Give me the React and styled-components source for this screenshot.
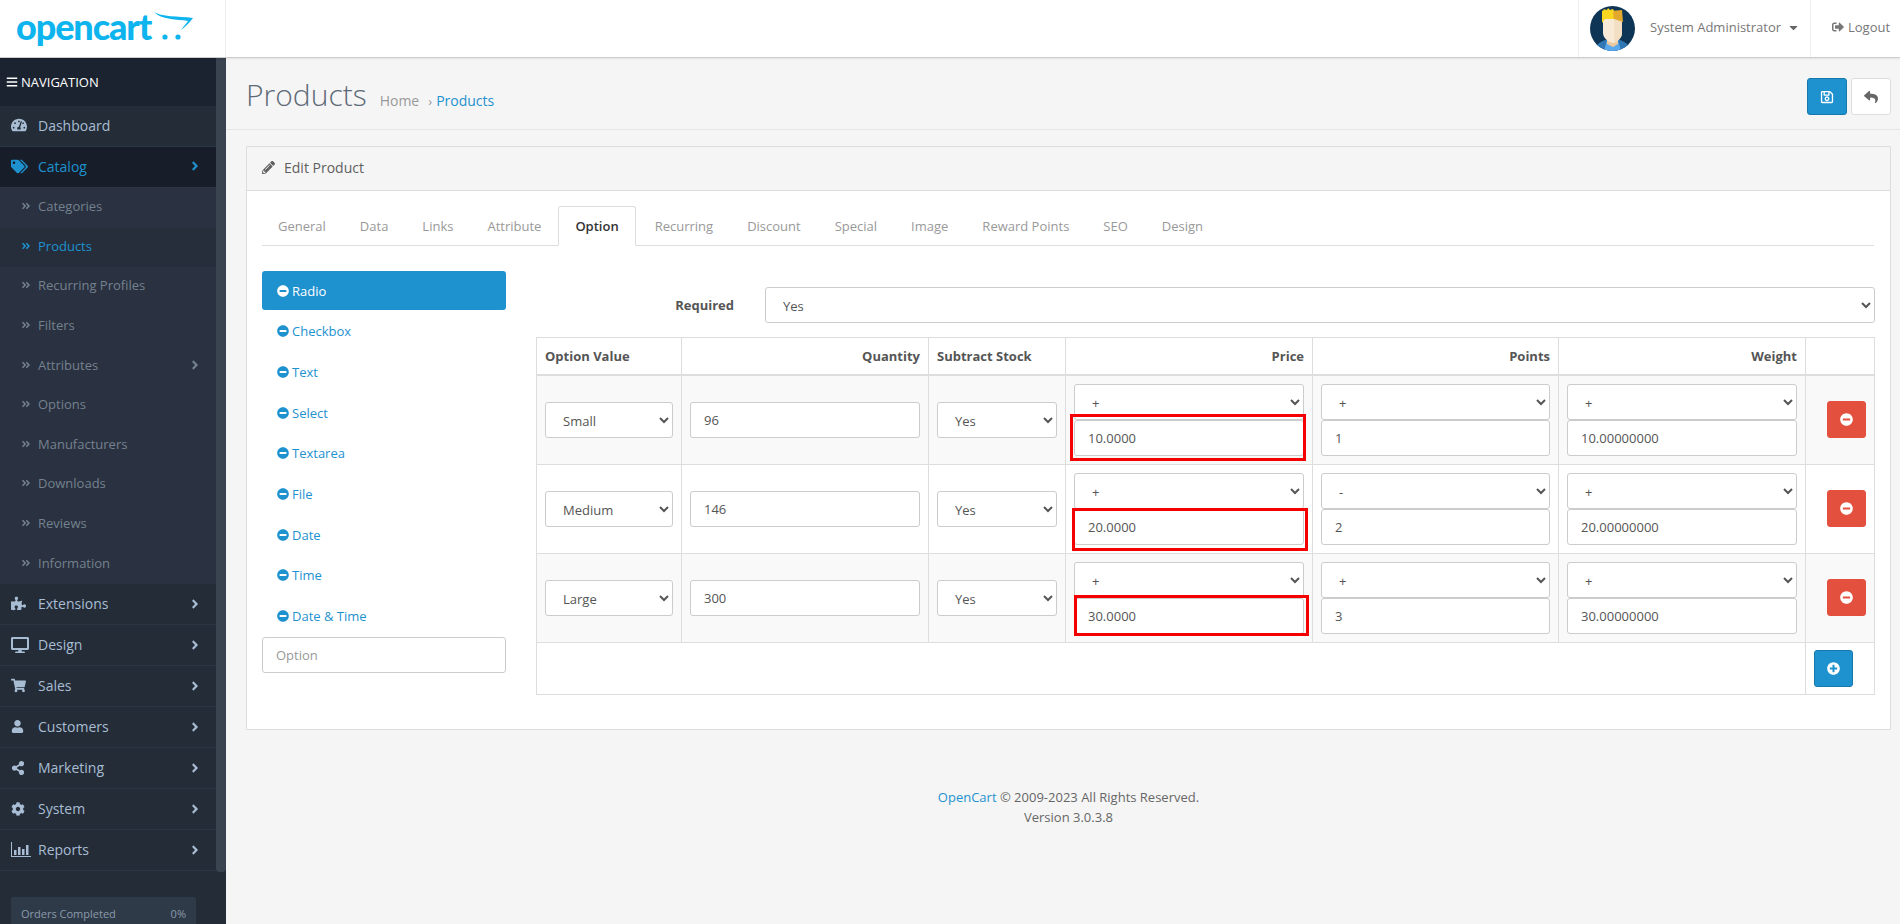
import React from 'react';
import styled, { createGlobalStyle } from 'styled-components';
import {
  FaAngleDoubleRight,
  FaAngleRight,
  FaBars,
  FaCaretDown,
  FaCog,
  FaDesktop,
  FaMinusCircle,
  FaPencilAlt,
  FaPlusCircle,
  FaPuzzlePiece,
  FaRegSave,
  FaReply,
  FaShareAlt,
  FaShoppingCart,
  FaSignOutAlt,
  FaTachometerAlt,
  FaTags,
  FaUser,
} from 'react-icons/fa';

const blue = '#1e91cf';

const GlobalStyle = createGlobalStyle`
  html, body {
    margin: 0;
    height: 100%;
    overflow: hidden;
    background: #f5f5f5;
    font-family: "Open Sans", sans-serif;
    font-size: 13px;
    color: #666;
  }
  * { box-sizing: border-box; }
`;

/* small chart icon, the package one has no axis like this */
const ReportsIcon = () => (
  <svg width="20" height="15" viewBox="0 0 20 15" fill="currentColor">
    <path d="M0 0h1v14h19v1H0z" />
    <path d="M3 8h2.5v5H3zM7 5h2.5v8H7zM11 7h2.5v6H11zM15 3h2.5v10H15z" />
  </svg>
);

const Avatar = () => (
  <svg width="45" height="45" viewBox="0 0 45 45">
    <clipPath id="avatar-clip"><circle cx="22.5" cy="22.5" r="22.5" /></clipPath>
    <g clipPath="url(#avatar-clip)">
      <rect width="45" height="45" fill="#0f3556" />
      <path d="M4 45c1-6 6-9 11-11h15c5 2 10 5 11 11z" fill="#2f77b5" />
      <path d="M14 45l3-11h11l3 11z" fill="#5ba8ea" />
      <path d="M17 38v-7h11v7l-5 3z" fill="#eec9a0" />
      <path d="M13 13h19v14c0 5-5 9-9 10-5-1-10-5-10-10z" fill="#f8ead6" />
      <path d="M24 13h8v14c0 5-4 8-8 10z" fill="#f3dfc4" />
      <path d="M20 5l12-1 1 12-9-3z" fill="#e3a92d" />
      <path d="M12 5l2-1-1-1 4 1 1-2 2 2 3-1 1 2-1 2 1 6-9 0-3 4z" fill="#f9d61f" />
    </g>
  </svg>
);

const Logo = () => (
  <LogoWrap>
    <LogoText>opencart</LogoText>
    <LogoCart width="42" height="30" viewBox="0 0 42 30" fill="#0db4ee">
      <path d="M2 0c7 5 24 4 39 6-3 4-8 9-12 12 2-3 5-6 7-9C25 7 9 8 2 0z" />
      <circle cx="13" cy="25" r="2.6" />
      <circle cx="26" cy="25" r="2.6" />
    </LogoCart>
  </LogoWrap>
);

const Header = () => (
  <TopBar>
    <LogoCell><Logo /></LogoCell>
    <TopSpacer />
    <UserCell>
      <Avatar />
      <UserName>System Administrator</UserName>
      <FaCaretDown size={13} color="#666" />
    </UserCell>
    <LogoutCell>
      <FaSignOutAlt size={12} />
      Logout
    </LogoutCell>
  </TopBar>
);

const mainMenu = [
  { icon: <FaPuzzlePiece size={15} />, label: 'Extensions' },
  { icon: <FaDesktop size={18} />, label: 'Design' },
  { icon: <FaShoppingCart size={15} />, label: 'Sales' },
  { icon: <FaUser size={13} />, label: 'Customers' },
  { icon: <FaShareAlt size={14} />, label: 'Marketing' },
  { icon: <FaCog size={14} />, label: 'System' },
  { icon: <ReportsIcon />, label: 'Reports' },
];

const catalogMenu = [
  { label: 'Categories' },
  { label: 'Products', active: true },
  { label: 'Recurring Profiles' },
  { label: 'Filters' },
  { label: 'Attributes', more: true },
  { label: 'Options' },
  { label: 'Manufacturers' },
  { label: 'Downloads' },
  { label: 'Reviews' },
  { label: 'Information' },
];

const Sidebar = () => (
  <Side>
    <SideColumn>
      <NavTitle><FaBars size={12} /> NAVIGATION</NavTitle>
      <NavItem $raised>
        <NavIcon><FaTachometerAlt size={16} /></NavIcon>
        Dashboard
      </NavItem>
      <NavItem $active $raised>
        <NavIcon><FaTags size={17} /></NavIcon>
        Catalog
        <Chevron><FaAngleRight size={14} /></Chevron>
      </NavItem>
      {catalogMenu.map((item) => (
        <SubItem key={item.label} $active={item.active}>
          <SubIcon><FaAngleDoubleRight size={10} /></SubIcon>
          {item.label}
          {item.more && <Chevron><FaAngleRight size={14} /></Chevron>}
        </SubItem>
      ))}
      {mainMenu.map((item) => (
        <NavItem key={item.label}>
          <NavIcon>{item.icon}</NavIcon>
          {item.label}
          <Chevron><FaAngleRight size={14} /></Chevron>
        </NavItem>
      ))}
      <Stats>
        <span>Orders Completed</span>
        <span>0%</span>
      </Stats>
    </SideColumn>
    <ScrollThumb />
  </Side>
);

const tabs = ['General', 'Data', 'Links', 'Attribute', 'Option', 'Recurring', 'Discount', 'Special', 'Image', 'Reward Points', 'SEO', 'Design'];
const pills = ['Radio', 'Checkbox', 'Text', 'Select', 'Textarea', 'File', 'Date', 'Time', 'Date & Time'];

const rows = [
  { name: 'Small', qty: '96', price: '10.0000', pointsSign: '+', points: '1', weight: '10.00000000', mark: { top: -6, bottom: -5, left: -4, right: -2 } },
  { name: 'Medium', qty: '146', price: '20.0000', pointsSign: '-', points: '2', weight: '20.00000000', mark: { top: -1, bottom: -6, left: -2, right: -4 } },
  { name: 'Large', qty: '300', price: '30.0000', pointsSign: '+', points: '3', weight: '30.00000000', mark: { top: -3, bottom: -2, left: 0, right: -5 } },
];

const Select = ({ value }) => (
  <Picker defaultValue={value}>
    <option>{value}</option>
  </Picker>
);

const OptionRow = ({ row, striped }) => (
  <BodyRow $striped={striped}>
    <Td><Select value={row.name} /></Td>
    <Td><Field defaultValue={row.qty} /></Td>
    <Td><Select value="Yes" /></Td>
    <StackCell>
      <Select value="+" />
      <MarkedField>
        <Field defaultValue={row.price} />
        <RedMark style={row.mark} />
      </MarkedField>
    </StackCell>
    <StackCell>
      <Select value={row.pointsSign} />
      <Field defaultValue={row.points} />
    </StackCell>
    <StackCell>
      <Select value="+" />
      <Field defaultValue={row.weight} />
    </StackCell>
    <ActionCell>
      <IconButton $color="#e3503e" $border="#e3503e">
        <FaMinusCircle size={13} />
      </IconButton>
    </ActionCell>
  </BodyRow>
);

const OptionTable = () => (
  <Table>
    <colgroup>
      <col width="145" />
      <col width="247" />
      <col width="137" />
      <col width="247" />
      <col width="246" />
      <col width="247" />
      <col width="69" />
    </colgroup>
    <thead>
      <tr>
        <Th>Option Value</Th>
        <Th $right>Quantity</Th>
        <Th>Subtract Stock</Th>
        <Th $right>Price</Th>
        <Th $right>Points</Th>
        <Th $right>Weight</Th>
        <Th />
      </tr>
    </thead>
    <tbody>
      {rows.map((row, i) => (
        <OptionRow key={row.name} row={row} striped={i % 2 === 0} />
      ))}
      <tr>
        <FootSpan colSpan="6" />
        <FootCell>
          <IconButton $color={blue} $border="#1978ab">
            <FaPlusCircle size={13} />
          </IconButton>
        </FootCell>
      </tr>
    </tbody>
  </Table>
);

const App = () => (
  <>
    <GlobalStyle />
    <Header />
    <Layout>
      <Sidebar />
      <Main>
        <PageHeader>
          <PageTitle>Products</PageTitle>
          <Crumbs>
            <span>Home</span>
            <CrumbSep>›</CrumbSep>
            <CrumbLink>Products</CrumbLink>
          </Crumbs>
          <HeaderActions>
            <HeaderButton $primary><FaRegSave size={14} /></HeaderButton>
            <HeaderButton><FaReply size={14} /></HeaderButton>
          </HeaderActions>
        </PageHeader>
        <Content>
          <Panel>
            <PanelHeading><FaPencilAlt size={13} /> Edit Product</PanelHeading>
            <PanelBody>
              <Tabs>
                {tabs.map((tab) => (
                  <Tab key={tab} $active={tab === 'Option'}>{tab}</Tab>
                ))}
              </Tabs>
              <OptionLayout>
                <PillColumn>
                  {pills.map((pill, i) => (
                    <Pill key={pill} $active={i === 0}>
                      <FaMinusCircle size={12} />
                      {pill}
                    </Pill>
                  ))}
                  <Field placeholder="Option" />
                </PillColumn>
                <div>
                  <RequiredRow>
                    <RequiredLabel>Required</RequiredLabel>
                    <Select value="Yes" />
                  </RequiredRow>
                  <OptionTable />
                </div>
              </OptionLayout>
            </PanelBody>
          </Panel>
          <Footer>
            <div><FooterLink>OpenCart</FooterLink> © 2009-2023 All Rights Reserved.</div>
            <div>Version 3.0.3.8</div>
          </Footer>
        </Content>
      </Main>
    </Layout>
  </>
);

const TopBar = styled.header`
  display: flex;
  height: 58px;
  background: #fff;
  border-bottom: 1px solid #ccc;
  box-shadow: 0 1px 2px rgba(0, 0, 0, 0.08);
  position: relative;
`;

const LogoCell = styled.div`
  width: 226px;
  padding: 0 0 0 16px;
  border-right: 1px solid #eee;
`;

const LogoWrap = styled.div`
  display: flex;
  align-items: flex-start;
`;

const LogoText = styled.span`
  font-family: Lato, sans-serif;
  font-weight: 900;
  font-size: 36px;
  line-height: 52px;
  letter-spacing: -1.1px;
  color: #0db4ee;
`;

const LogoCart = styled.svg`
  margin: 12px 0 0 1px;
`;

const TopSpacer = styled.div`
  flex: 1;
`;

const UserCell = styled.div`
  display: flex;
  align-items: center;
  width: 232px;
  padding-left: 11px;
  border-left: 1px solid #eee;
  color: #777;

  > svg:last-child {
    margin-bottom: 3px;
  }
`;

const UserName = styled.span`
  margin: 0 6px 4px 15px;
`;

const LogoutCell = styled.div`
  display: flex;
  align-items: center;
  gap: 4px;
  width: 90px;
  padding: 0 0 4px 21px;
  border-left: 1px solid #eee;
  color: #777;
`;

const Layout = styled.div`
  display: flex;
  height: 866px;
`;

const Side = styled.aside`
  display: flex;
  flex: 0 0 226px;
  background: #242c38;
  overflow: hidden;
`;

const SideColumn = styled.nav`
  flex: 0 0 216px;
`;

const ScrollThumb = styled.div`
  flex: 0 0 10px;
  height: 814px;
  background: #3a4350;
  border-radius: 0 0 4px 4px;
`;

const NavTitle = styled.div`
  height: 48px;
  padding-left: 6px;
  display: flex;
  align-items: center;
  gap: 3px;
  background: #1b2230;
  color: #fff;
  font-size: 13px;
`;

const NavItem = styled.div`
  display: flex;
  align-items: center;
  height: 41px;
  padding: 0 14px ${({ $raised }) => ($raised ? '2px' : '0')} 11px;
  font-size: 14px;
  color: ${({ $active }) => ($active ? blue : '#a8bdd3')};
  background: ${({ $active }) => ($active ? '#181e29' : '#242c38')};
  border-bottom: 1px solid #2c3542;
`;

const NavIcon = styled.span`
  display: flex;
  align-items: center;
  flex: 0 0 27px;
`;

const Chevron = styled.span`
  display: flex;
  margin-left: auto;
`;

const SubItem = styled.div`
  display: flex;
  align-items: center;
  height: 39.6px;
  padding: 0 14px 3px 21px;
  font-size: 13px;
  color: ${({ $active }) => ($active ? blue : '#74828f')};
  background: ${({ $active }) => ($active ? '#262e3b' : '#2a3140')};
`;

const SubIcon = styled.span`
  display: flex;
  flex: 0 0 17px;
`;

const Stats = styled.div`
  display: flex;
  justify-content: space-between;
  height: 60px;
  margin: 26px 20px 0 11px;
  padding: 9px 10px;
  background: #2f3a49;
  border-radius: 2px;
  font-size: 11px;
  color: #8a9aa9;
`;

const Main = styled.main`
  flex: 1;
  min-width: 0;
`;

const PageHeader = styled.div`
  display: flex;
  align-items: flex-start;
  height: 72px;
  padding: 20px 9px 0 20px;
  border-bottom: 1px solid #e6e6e6;
`;

const PageTitle = styled.h1`
  margin: -1px 0 0;
  font-size: 30px;
  line-height: 36px;
  font-weight: 300;
  color: #5e6a77;
`;

const Crumbs = styled.div`
  display: flex;
  align-items: center;
  margin: 13px 0 0 13px;
  font-size: 14px;
  line-height: 20px;
  color: #999;
`;

const CrumbSep = styled.span`
  margin: 0 4px 0 9px;
  font-size: 13px;
`;

const CrumbLink = styled.span`
  color: ${blue};
`;

const HeaderActions = styled.div`
  display: flex;
  gap: 4px;
  margin-left: auto;
`;

const HeaderButton = styled.button`
  display: flex;
  align-items: center;
  justify-content: center;
  width: 40px;
  height: 37px;
  padding: 0;
  border-radius: 3px;
  border: 1px solid ${({ $primary }) => ($primary ? '#1978ab' : '#ddd')};
  background: ${({ $primary }) => ($primary ? blue : '#fff')};
  color: ${({ $primary }) => ($primary ? '#fff' : '#666')};
`;

const Content = styled.div`
  padding: 16px 9px 0 20px;
`;

const Panel = styled.section`
  background: #fff;
  border: 1px solid #ddd;
  border-radius: 1px;
`;

const PanelHeading = styled.div`
  display: flex;
  align-items: center;
  gap: 9px;
  height: 44px;
  padding: 0 0 2px 15px;
  background: #f5f5f5;
  border-bottom: 1px solid #ddd;
  font-size: 14px;
  color: #5f5f5f;
`;

const PanelBody = styled.div`
  padding: 15px 16px 34px 15px;
`;

const Tabs = styled.ul`
  display: flex;
  gap: 2px;
  height: 40px;
  margin: 0 0 25px;
  padding: 0;
  list-style: none;
  border-bottom: 1px solid #ddd;
`;

const Tab = styled.li`
  height: 40px;
  margin: ${({ $active }) => ($active ? '0 1px 0 -1px' : '0')};
  padding: 0 ${({ $active }) => ($active ? '16px' : '15px')};
  line-height: 39px;
  border: 1px solid ${({ $active }) => ($active ? '#ddd' : 'transparent')};
  border-bottom-color: ${({ $active }) => ($active ? '#fff' : 'transparent')};
  border-radius: 3px 3px 0 0;
  background: ${({ $active }) => ($active ? '#fff' : 'transparent')};
  color: ${({ $active }) => ($active ? '#333' : '#999')};
  font-weight: ${({ $active }) => ($active ? 600 : 400)};
`;

const OptionLayout = styled.div`
  display: grid;
  grid-template-columns: 244px 1fr;
  gap: 30px;
`;

const PillColumn = styled.div`
  display: flex;
  flex-direction: column;
`;

const Pill = styled.div`
  display: flex;
  align-items: center;
  gap: 3px;
  height: 39px;
  margin-bottom: 1.7px;
  padding-left: 15px;
  border-radius: 3px;
  background: ${({ $active }) => ($active ? blue : 'transparent')};
  color: ${({ $active }) => ($active ? '#fff' : blue)};
`;

const RequiredRow = styled.div`
  display: grid;
  grid-template-columns: 198px 1fr;
  gap: 31px;
  align-items: center;
  padding-top: 16px;
  margin-bottom: 14px;
`;

const RequiredLabel = styled.label`
  text-align: right;
  font-weight: 700;
  color: #555;
`;

const Picker = styled.select`
  display: block;
  width: 100%;
  height: 36px;
  padding: 8px 13px;
  background: #fff;
  border: 1px solid #ccc;
  border-radius: 3px;
  font: 13px "Open Sans", sans-serif;
  color: #555;
`;

const Field = styled.input`
  display: block;
  width: 100%;
  height: 36px;
  padding: 8px 13px;
  background: #fff;
  border: 1px solid #ccc;
  border-radius: 3px;
  font: 13px "Open Sans", sans-serif;
  color: #555;

  &::placeholder {
    color: #999;
  }
`;

const Table = styled.table`
  width: 1338px;
  table-layout: fixed;
  border-collapse: collapse;
`;

const Th = styled.th`
  height: 37px;
  padding: 0 8px;
  border: 1px solid #ddd;
  border-bottom-width: 2px;
  text-align: ${({ $right }) => ($right ? 'right' : 'left')};
  font-weight: 700;
  color: #555;
`;

const BodyRow = styled.tr`
  background: ${({ $striped }) => ($striped ? '#f9f9f9' : '#fff')};
`;

const Td = styled.td`
  height: 89px;
  padding: 8px;
  border: 1px solid #ddd;
  vertical-align: middle;
`;

const StackCell = styled(Td)`
  vertical-align: top;
`;

const ActionCell = styled(Td)`
  padding-left: 21px;
`;

const MarkedField = styled.div`
  position: relative;
`;

const RedMark = styled.span`
  position: absolute;
  border: 3px solid #f40000;
  pointer-events: none;
`;

const IconButton = styled.button`
  display: flex;
  align-items: center;
  justify-content: center;
  width: 39px;
  height: 37px;
  padding: 0;
  background: ${({ $color }) => $color};
  border: 1px solid ${({ $border }) => $border};
  border-radius: 3px;
  color: #fff;
`;

const FootSpan = styled.td`
  height: 51px;
  border: 1px solid #ddd;
`;

const FootCell = styled(FootSpan)`
  padding: 7px 8px;
`;

const Footer = styled.footer`
  margin-top: 57px;
  text-align: center;
  line-height: 20px;
  color: #666;
`;

const FooterLink = styled.span`
  color: ${blue};
`;

export default App;
